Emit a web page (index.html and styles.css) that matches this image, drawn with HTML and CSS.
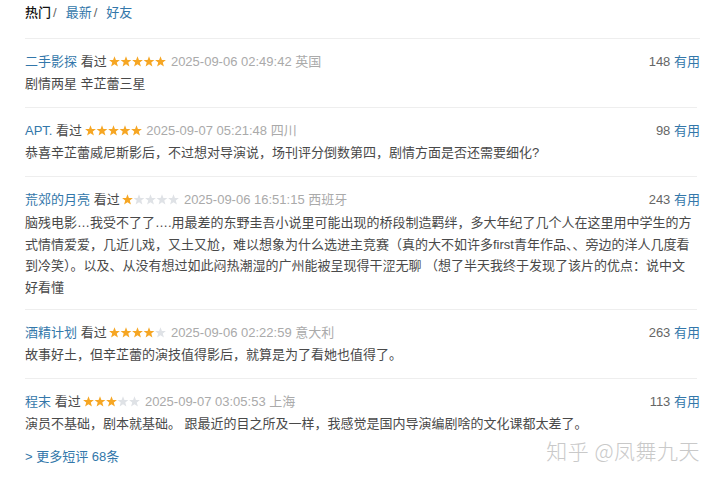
FILE: index.html
```html
<!DOCTYPE html>
<html lang="zh-CN">
<head>
  <meta charset="UTF-8">
  <meta name="viewport" content="width=device-width, initial-scale=1.0">
  <title>短评</title>
  <link rel="stylesheet" href="styles.css">
</head>
<body>
  <svg width="0" height="0" class="defs">
    <defs>
      <polygon id="star" points="5.5,0.2 6.9,3.9 10.9,4 7.8,6.5 8.9,10.5 5.5,8.2 2.1,10.5 3.2,6.5 0.1,4 4.1,3.9"/>
    </defs>
  </svg>
  <div class="comments">
    <div class="tabs">
      <span class="cur">热门</span><span class="sep">/</span><a href="#">最新</a><span class="sep">/</span><a href="#">好友</a>
    </div>

    <div class="item">
      <div class="info">
        <span class="meta">
          <a class="user" href="#">二手影探</a>
          <span class="seen">看过</span>
          <svg class="stars" width="57" height="11"><use href="#star" x="0" class="on"/><use href="#star" x="11.5" class="on"/><use href="#star" x="23" class="on"/><use href="#star" x="34.5" class="on"/><use href="#star" x="46" class="on"/></svg>
          <span class="time">2025-09-06 02:49:42</span>
          <span class="loc">英国</span>
        </span>
        <span class="votes"><span class="count">148</span> <a href="#">有用</a></span>
      </div>
      <p class="short">剧情两星 辛芷蕾三星</p>
    </div>

    <div class="item">
      <div class="info">
        <span class="meta">
          <a class="user" href="#">APT.</a>
          <span class="seen">看过</span>
          <svg class="stars" width="57" height="11"><use href="#star" x="0" class="on"/><use href="#star" x="11.5" class="on"/><use href="#star" x="23" class="on"/><use href="#star" x="34.5" class="on"/><use href="#star" x="46" class="on"/></svg>
          <span class="time">2025-09-07 05:21:48</span>
          <span class="loc">四川</span>
        </span>
        <span class="votes"><span class="count">98</span> <a href="#">有用</a></span>
      </div>
      <p class="short">恭喜辛芷蕾威尼斯影后，不过想对导演说，场刊评分倒数第四，剧情方面是否还需要细化?</p>
    </div>

    <div class="item">
      <div class="info">
        <span class="meta">
          <a class="user" href="#">荒郊的月亮</a>
          <span class="seen">看过</span>
          <svg class="stars" width="57" height="11"><use href="#star" x="0" class="on"/><use href="#star" x="11.5" class="off"/><use href="#star" x="23" class="off"/><use href="#star" x="34.5" class="off"/><use href="#star" x="46" class="off"/></svg>
          <span class="time">2025-09-06 16:51:15</span>
          <span class="loc">西班牙</span>
        </span>
        <span class="votes"><span class="count">243</span> <a href="#">有用</a></span>
      </div>
      <p class="short long">脑残电影…我受不了了….用最差的东野圭吾小说里可能出现的桥段制造羁绊，多大年纪了几个人在这里用中学生的方式情情爱爱，几近儿戏，又土又尬，难以想象为什么选进主竞赛（真的大不如许多first青年作品、、旁边的洋人几度看到冷笑）。以及、从没有想过如此闷热潮湿的广州能被呈现得干涩无聊 （想了半天我终于发现了该片的优点：说中文好看懂</p>
    </div>

    <div class="item">
      <div class="info">
        <span class="meta">
          <a class="user" href="#">酒精计划</a>
          <span class="seen">看过</span>
          <svg class="stars" width="57" height="11"><use href="#star" x="0" class="on"/><use href="#star" x="11.5" class="on"/><use href="#star" x="23" class="on"/><use href="#star" x="34.5" class="on"/><use href="#star" x="46" class="off"/></svg>
          <span class="time">2025-09-06 02:22:59</span>
          <span class="loc">意大利</span>
        </span>
        <span class="votes"><span class="count">263</span> <a href="#">有用</a></span>
      </div>
      <p class="short">故事好土，但辛芷蕾的演技值得影后，就算是为了看她也值得了。</p>
    </div>

    <div class="item last">
      <div class="info">
        <span class="meta">
          <a class="user" href="#">程末</a>
          <span class="seen">看过</span>
          <svg class="stars" width="57" height="11"><use href="#star" x="0" class="on"/><use href="#star" x="11.5" class="on"/><use href="#star" x="23" class="on"/><use href="#star" x="34.5" class="off"/><use href="#star" x="46" class="off"/></svg>
          <span class="time">2025-09-07 03:05:53</span>
          <span class="loc">上海</span>
        </span>
        <span class="votes"><span class="count">113</span> <a href="#">有用</a></span>
      </div>
      <p class="short">演员不基础，剧本就基础。 跟最近的目之所及一样，我感觉是国内导演编剧啥的文化课都太差了。</p>
    </div>

    <div class="more"><a href="#">&gt; 更多短评 68条</a></div>
    <div class="watermark">知乎 @凤舞九天</div>
  </div>
</body>
</html>
```

FILE: styles.css
```css
:root {
  --text: #494949;
  --link: #37a;
  --muted: #aaa;
  --line: #eee;
  --star: #f6a623;
  --star-off: #dfe2e6;
}
body {
  margin: 0;
  background: #fff;
  color: var(--text);
  font-family: 'Liberation Sans', Arial, 'Noto Sans CJK SC', sans-serif;
  font-size: 13px;
}
a {
  color: var(--link);
  text-decoration: none;
}
.defs {
  position: absolute;
}
.comments {
  position: relative;
  width: 675px;
  margin-left: 25px;
  height: 477px;
}
.tabs {
  line-height: 26px;
  padding-bottom: 12px;
  border-bottom: 1px solid var(--line);
}
.tabs .cur {
  color: #111;
  font-weight: 500;
}
.tabs .sep {
  color: #666;
  margin: 0 9px 0 2px;
}
.item {
  padding: 12px 0 13px;
  border-bottom: 1px solid var(--line);
  margin-right: 3px;
}
.item.last {
  border-bottom: none;
  padding-bottom: 0;
}
.info {
  display: flex;
  justify-content: space-between;
  line-height: 22px;
  margin-right: -3px;
}
.meta .seen {
  color: var(--text);
}
.stars {
  vertical-align: -1px;
  margin: 0 1px 0 -1px;
}
.stars .on { fill: var(--star); }
.stars .off { fill: var(--star-off); }
.time, .loc {
  color: var(--muted);
}
.votes .count {
  color: #666;
}
.short {
  margin: 0;
  line-height: 21px;
  word-break: break-all;
}
.short.long {
  line-height: 21.5px;
  padding-top: 1px;
  margin-bottom: -2px;
}
.more {
  margin-top: 12px;
  line-height: 22px;
}
.more a::first-letter {
  color: var(--text);
}
.watermark {
  position: absolute;
  right: 0;
  top: 435px;
  font-size: 21px;
  color: #c9c9c9;
  letter-spacing: 0.5px;
  font-family: 'Noto Sans CJK SC', sans-serif;
  font-weight: 300;
}
```
